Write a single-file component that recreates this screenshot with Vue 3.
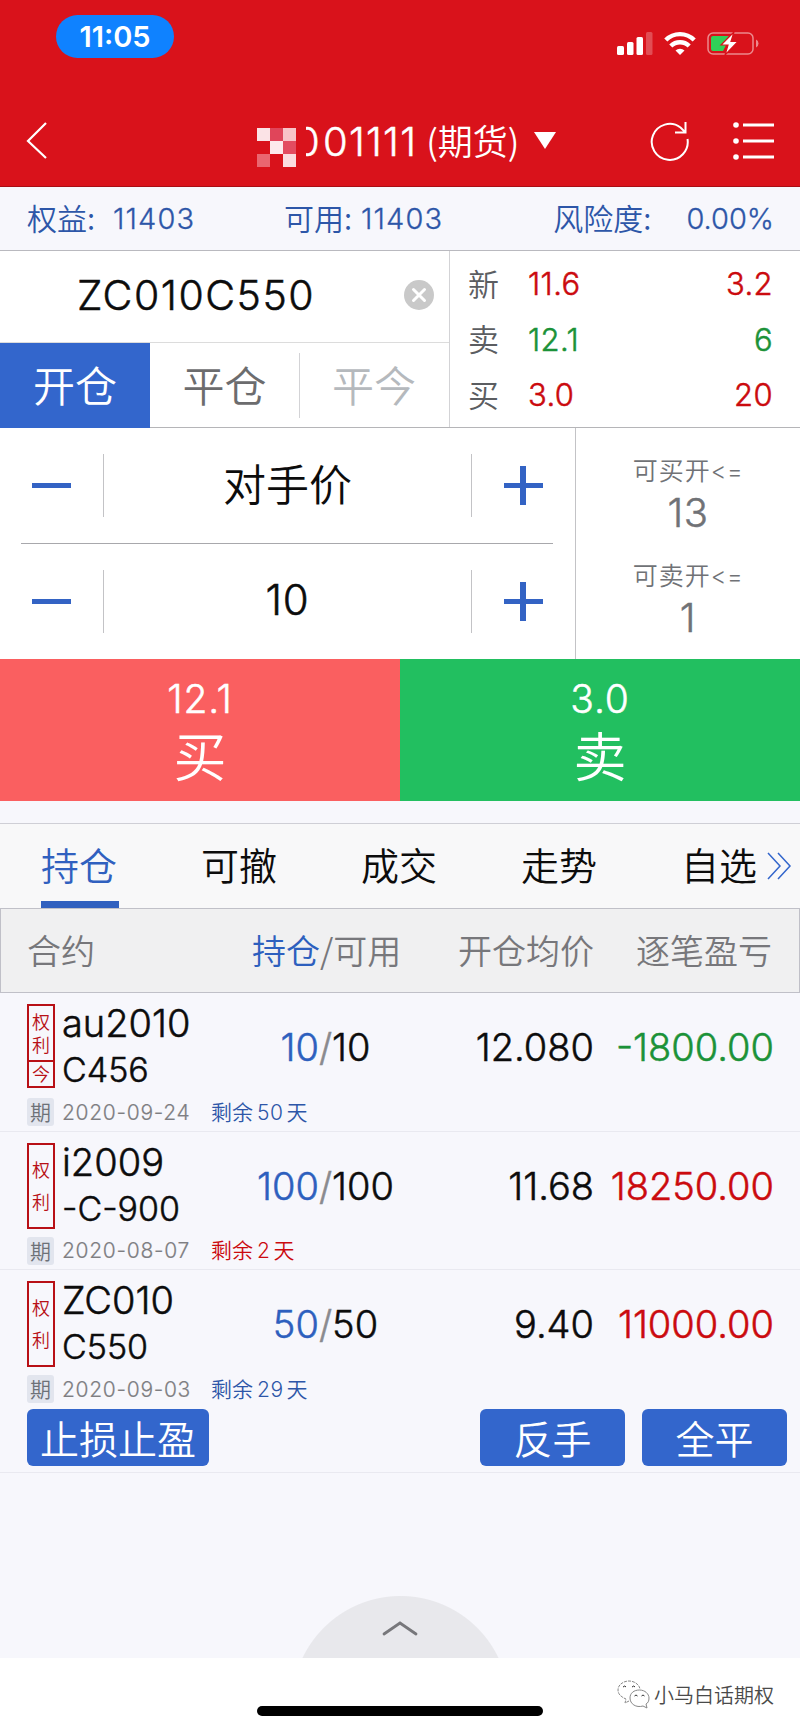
<script setup>
import { ref } from "vue";

const quotes = [
  { label: "新", price: "11.6", volume: "3.2", color: "red" },
  { label: "卖", price: "12.1", volume: "6", color: "green" },
  { label: "买", price: "3.0", volume: "20", color: "red" },
];

const modes = ["开仓", "平仓", "平今"];
const mode = ref("开仓");

const tabs = ["持仓", "可撤", "成交", "走势", "自选"];
const activeTab = ref("持仓");

const count = ref(10);

const positions = [
  {
    name: "au2010",
    strike: "C456",
    today: true,
    date: "2020-09-24",
    days: 50,
    total: 10,
    usable: 10,
    price: "12.080",
    profit: "-1800.00",
  },
  {
    name: "i2009",
    strike: "-C-900",
    date: "2020-08-07",
    days: 2,
    total: 100,
    usable: 100,
    price: "11.68",
    profit: "18250.00",
  },
  {
    name: "ZC010",
    strike: "C550",
    date: "2020-09-03",
    days: 29,
    total: 50,
    usable: 50,
    price: "9.40",
    profit: "11000.00",
  },
];
</script>

<template>
  <div class="app">
    <header class="header">
      <div class="status">
        <span class="clock">11:05</span>
        <svg class="status-icons" width="144" height="28" viewBox="0 0 144 28">
          <g fill="#fff">
            <rect x="1" y="16" width="7" height="9" rx="1.5" />
            <rect x="11" y="12" width="6.5" height="13" rx="1.5" />
            <rect x="20.500" y="7" width="6.500" height="18" rx="1.5" />
            <rect x="30" y="2" width="6.500" height="23" rx="1.5" opacity=".25" />
            <path d="M64 25l-4.500-4.500a6.500 6.500 0 0 1 9 0z" />
          </g>
          <g fill="none" stroke="#fff" stroke-width="4.400">
            <path d="M49.800 10a20 20 0 0 1 28.400 0" />
            <path d="M54.800 16a13 13 0 0 1 18.400 0" />
          </g>
          <rect x="92" y="3" width="45" height="21" rx="5" fill="none" stroke="#fff" stroke-opacity=".5" stroke-width="1.500" />
          <path d="M140 9.500q2.500 1 2.500 4t-2.500 4z" fill="#fff" opacity=".5" />
          <path d="M97 6h16l-7 9h4l-3 6H97q-2 0-2-2V8q0-2 2-2z" fill="#30d158" />
          <path d="M118 2l-13 13h7l-3 10 13-13.500h-7z" fill="#fff" stroke="#d9121b" stroke-width="1.200" />
        </svg>
      </div>
      <div class="nav">
        <svg class="back" width="22" height="38" viewBox="0 0 22 38">
          <path d="M20 1L2 19l18 17" fill="none" stroke="#fff" stroke-width="2.200" />
        </svg>
        <div class="account">
          <svg class="mosaic" width="39" height="39" viewBox="0 0 3 3" shape-rendering="crispEdges">
            <rect width="1" height="1" fill="#fbe3e6" />
            <rect x="1" width="1" height="1" fill="#e0455a" />
            <rect x="2" width="1" height="1" fill="#f8c3c8" />
            <rect x="1" y="1" width="1" height="1" fill="#fdeaec" />
            <rect x="2" y="1" width="1" height="1" fill="#e34c60" />
            <rect y="2" width="1" height="1" fill="#ea6670" />
            <rect x="2" y="2" width="1" height="1" fill="#fbdcdf" />
          </svg>
          <span class="clip"><span>0</span></span>
          <span class="number">01111</span>
          <span class="kind zh">(期货)</span>
          <span class="caret"></span>
        </div>
        <svg class="refresh" width="42" height="42" viewBox="0 0 42 42">
          <path d="M38.500 19a18 18 0 1 1-7-11.500l4 4M36.500 2v10.500H26" fill="none" stroke="#fff" stroke-width="2" />
        </svg>
        <svg class="menu" width="42" height="40" viewBox="0 0 42 40">
          <g fill="#fff">
            <circle cx="3" cy="4" r="2.800" />
            <circle cx="3" cy="20" r="2.800" />
            <circle cx="3" cy="36" r="2.800" />
            <path d="M10 2.500h31v3H10zM10 18.500h31v3H10zM10 34.500h31v3H10z" />
          </g>
        </svg>
      </div>
    </header>

    <div class="funds">
      <span class="fund equity"><span class="zh">权益:</span><b>11403</b></span>
      <span class="fund free"><span class="zh">可用:</span><b>11403</b></span>
      <span class="fund risk"><span class="zh">风险度:</span><b>0.00%</b></span>
    </div>

    <section class="contract">
      <div class="contract-left">
        <div class="symbol">
          <span>ZC010C550</span>
          <svg width="30" height="30" viewBox="0 0 30 30">
            <circle cx="15" cy="15" r="15" fill="#c9c9c9" />
            <path d="M9.500 9.500l11 11M20.500 9.500l-11 11" stroke="#fff" stroke-width="3" stroke-linecap="round" />
          </svg>
        </div>
        <div class="modes">
          <div
            v-for="(item, index) in modes"
            :key="item"
            class="mode zh"
            :class="{ active: mode === item, disabled: index === 2 }"
            @click="mode = item"
          >
            {{ item }}
          </div>
        </div>
      </div>
      <div class="quotes">
        <div class="quote" v-for="q in quotes" :key="q.label">
          <span class="quote-label zh">{{ q.label }}</span>
          <span :class="q.color">{{ q.price }}</span>
          <span class="volume" :class="q.color">{{ q.volume }}</span>
        </div>
      </div>
    </section>

    <section class="ticket">
      <div class="inputs">
        <div class="stepper">
          <button class="step minus"></button>
          <div class="value zh">对手价</div>
          <button class="step plus"></button>
        </div>
        <div class="stepper">
          <button class="step minus" @click="count--"></button>
          <div class="value">{{ count }}</div>
          <button class="step plus" @click="count++"></button>
        </div>
      </div>
      <div class="limits">
        <div class="limit"><span class="zh">可买开<u>&lt;=</u></span><b>13</b></div>
        <div class="limit"><span class="zh">可卖开<u>&lt;=</u></span><b>1</b></div>
      </div>
    </section>

    <div class="trade">
      <button class="buy"><span>12.1</span><strong class="zh">买</strong></button>
      <button class="sell"><span>3.0</span><strong class="zh">卖</strong></button>
    </div>

    <nav class="tabs">
      <div
        v-for="tab in tabs"
        :key="tab"
        class="tab zh"
        :class="{ active: activeTab === tab }"
        @click="activeTab = tab"
      >
        {{ tab }}
      </div>
      <svg class="more" width="26" height="28" viewBox="0 0 26 28">
        <path d="M1 1l12 13L1 27M11 1l12 13-12 13" fill="none" stroke="#3366cc" stroke-width="1.500" />
      </svg>
    </nav>

    <div class="grid thead zh">
      <span>合约</span>
      <span class="center"><em>持仓</em>/可用</span>
      <span class="right">开仓均价</span>
      <span class="right">逐笔盈亏</span>
    </div>

    <div class="position" v-for="p in positions" :key="p.name">
      <div class="grid">
        <div class="instrument">
          <div class="tag zh" :class="{ short: p.today }">
            <div class="tag-main"><i>权</i><i>利</i></div>
            <div class="tag-today" v-if="p.today">今</div>
          </div>
          <div class="names">
            <div class="name">{{ p.name }}</div>
            <div class="strike">{{ p.strike }}</div>
          </div>
        </div>
        <div class="amount center">
          <em>{{ p.total }}</em><span class="slash">/</span><span>{{ p.usable }}</span>
        </div>
        <div class="amount right">{{ p.price }}</div>
        <div class="amount right" :class="p.profit[0] === '-' ? 'green' : 'red'">{{ p.profit }}</div>
      </div>
      <div class="expiry">
        <span class="badge zh">期</span>
        <span class="date">{{ p.date }}</span>
        <span class="remain zh" :class="{ red: p.days < 10 }">剩余<u>{{ p.days }}</u>天</span>
      </div>
    </div>

    <div class="actions zh">
      <button class="stop">止损止盈</button>
      <button>反手</button>
      <button>全平</button>
    </div>

    <div class="drawer">
      <div class="handle">
        <svg width="36" height="16" viewBox="0 0 36 16">
          <path d="M2 14L18 3l16 11" fill="none" stroke="#77777b" stroke-width="2.800" stroke-linecap="round" />
        </svg>
      </div>
    </div>

    <footer class="footer">
      <div class="home-bar"></div>
      <div class="credit">
        <svg width="34" height="30" viewBox="0 0 34 30" fill="none" stroke="#888" stroke-width="1">
          <path d="M12 21l-4 2 1-4C4 17 1 14 1 10 1 5 6 1 12 1c5 0 10 3 11 8" stroke-dasharray="3 1" />
          <path d="M30 28l-4-2c-7 2-13-2-13-8 0-5 4-8 9.500-8S32 14 32 18c0 3-1 5-3 6z" />
          <path d="M6 7q2-2 3 0M15 7q2-2 3 0M17.500 16q1.500-2 3 0M24.500 16q1.500-2 3 0" stroke="#333" />
        </svg>
        <span class="zh">小马白话期权</span>
      </div>
    </footer>
  </div>
</template>

<style>
body {
  margin: 0;
}
</style>

<style scoped>
.app {
  width: 800px;
  height: 1731px;
  display: flex;
  flex-direction: column;
  overflow: hidden;
  background: #f7f7fc;
  color: #0c0c0c;
  font-family: Inter, "Noto Sans CJK SC", sans-serif;
  font-weight: 350;
  -webkit-text-stroke: 0.5px;
  white-space: nowrap;
}
.app * {
  box-sizing: border-box;
}
.zh {
  font-family: "Noto Sans CJK SC", sans-serif;
  font-weight: 350;
  -webkit-text-stroke: 0;
}
b, em, i, u {
  font-weight: inherit;
  font-style: normal;
  text-decoration: none;
}
button {
  border: 0;
  padding: 0;
  color: #fff;
  font: inherit;
}
em {
  color: #2d5fbe;
}
.red {
  color: #cb0a0e;
}
.green {
  color: #1b9238;
}
.center {
  text-align: center;
}
.right {
  text-align: right;
}

/* Header */
.header {
  height: 187px;
  background: #d9121b;
  border-bottom: 1px solid #a80d14;
  color: #fff;
}
.status {
  height: 96px;
  padding: 15px 40px 0 56px;
  display: flex;
  justify-content: space-between;
}
.clock {
  width: 118px;
  height: 43px;
  border-radius: 22px;
  background: #0f82ff;
  font-size: 29px;
  font-weight: 600;
  line-height: 43px;
  text-align: center;
  -webkit-text-stroke: 0;
}
.status-icons {
  margin-top: 15px;
}
.nav {
  height: 90px;
  display: flex;
  align-items: center;
  padding: 0 25px 0 26px;
}
.account {
  display: flex;
  align-items: center;
  margin-left: 209px;
  font-size: 40px;
  letter-spacing: 1.3px;
}
.mosaic {
  margin-top: 12px;
}
.clip {
  width: 15px;
  height: 48px;
  margin-left: 10px;
  display: flex;
  justify-content: flex-end;
  overflow: hidden;
}
.number {
  margin-left: 2px;
}
.kind {
  margin: -4px 0 0 9px;
  font-size: 35px;
  letter-spacing: 0;
}
.caret {
  margin: 0 0 2px 15px;
  border: 11px solid transparent;
  border-top: 17px solid #fff;
  border-bottom: 0;
}
.refresh {
  margin-left: auto;
}
.menu {
  margin-left: 42px;
}

/* Funds */
.funds {
  height: 64px;
  display: flex;
  align-items: center;
  padding: 0 27px;
  border-bottom: 1px solid #b9b9bf;
  color: #2d56a8;
  font-size: 29px;
  letter-spacing: 1.1px;
  -webkit-text-stroke: 0.3px;
}
.fund {
  display: flex;
  align-items: center;
}
.fund .zh {
  margin-top: -4px;
  font-size: 30px;
  letter-spacing: 0;
}
.equity {
  width: 257px;
}
.equity b {
  margin-left: 18px;
}
.free b {
  margin-left: 9px;
}
.risk {
  margin-left: auto;
  margin-right: -1px;
}
.risk b {
  margin-left: 35px;
  letter-spacing: 0;
}

/* Contract and quotes */
.contract {
  height: 177px;
  display: flex;
  background: #fff;
  border-bottom: 1px solid #b5b5b8;
}
.contract-left {
  width: 450px;
  border-right: 1px solid #d3d3d6;
}
.symbol {
  height: 92px;
  display: flex;
  align-items: center;
  justify-content: space-between;
  padding: 0 15px 4px 77px;
  border-bottom: 1px solid #dcdcdc;
  font-size: 41px;
  letter-spacing: 1.5px;
}
.modes {
  height: 85px;
  display: flex;
}
.mode {
  width: 149px;
  margin: 10px 0;
  padding-bottom: 4px;
  display: flex;
  align-items: center;
  justify-content: center;
  font-size: 42px;
  color: #6c6c6e;
}
.mode.active {
  width: 150px;
  margin: 0;
  background: #3366cc;
  color: #fff;
}
.mode.disabled {
  border-left: 1px solid #d3d3d6;
  color: #b5b9bd;
}
.quotes {
  flex: 1;
  padding: 5px 27px 4px 18px;
}
.quote {
  height: 55.5px;
  display: flex;
  align-items: center;
  font-size: 31px;
  letter-spacing: 0.4px;
}
.quote-label {
  width: 60px;
  margin-top: -3px;
  color: #5b5d61;
}
.volume {
  margin-left: auto;
}

/* Order ticket */
.ticket {
  height: 231px;
  display: flex;
  background: #fff;
}
.inputs {
  width: 576px;
  padding: 0 22px 0 21px;
  border-right: 1px solid #c3c3c6;
}
.stepper {
  height: 115.5px;
  display: flex;
  align-items: center;
}
.stepper:first-child {
  border-bottom: 1px solid #a8a8ac;
}
.step {
  width: 60px;
  height: 39px;
  background: linear-gradient(#3363c4, #3363c4) 50% 50% / 39px 5px no-repeat;
}
.minus {
  margin-right: 22px;
}
.plus {
  width: 60px;
  margin-left: 21px;
  background: linear-gradient(#3363c4, #3363c4) 50% 50% / 39px 5px no-repeat,
    linear-gradient(#3363c4, #3363c4) 50% 50% / 6px 39px no-repeat;
}
.value {
  flex: 1;
  height: 63px;
  border: solid #c3c3c6;
  border-width: 0 1px;
  display: flex;
  align-items: center;
  justify-content: center;
  padding-bottom: 3px;
  font-size: 42px;
  letter-spacing: 0.8px;
}
.value.zh {
  padding-bottom: 7px;
  font-size: 43px;
  letter-spacing: 0;
}
.limits {
  flex: 1;
  padding: 22px 0 0;
  color: #707276;
}
.limit {
  height: 105px;
  display: flex;
  flex-direction: column;
  align-items: center;
}
.limit .zh {
  font-size: 25px;
  line-height: 38px;
  letter-spacing: 1px;
}
.limit u {
  font-family: Inter, sans-serif;
  font-size: 24px;
  letter-spacing: 0.5px;
}
.limit b {
  font-size: 40px;
  line-height: 44px;
  letter-spacing: 0.6px;
}

/* Buy and sell */
.trade {
  height: 142px;
  display: flex;
}
.trade button {
  flex: 1;
  display: flex;
  flex-direction: column;
  align-items: center;
  padding-top: 16px;
}
.trade span {
  font-size: 39px;
  line-height: 48px;
  letter-spacing: 0.8px;
}
.trade strong {
  font-size: 53px;
  line-height: 62px;
}
.buy {
  background: #fa5f60;
}
.sell {
  background: #22bf60;
}

/* Tabs */
.tabs {
  height: 85px;
  margin-top: 22px;
  display: flex;
  align-items: center;
  padding-left: 41px;
  border-top: 1px solid #cfcfd6;
  background: #f8f8f9;
  font-size: 38px;
}
.tab {
  width: 78px;
  height: 84px;
  margin-right: 82px;
  border-bottom: 7px solid transparent;
  line-height: 80px;
}
.tab.active {
  border-color: #3060bf;
  color: #3060bf;
}
.more {
  margin-left: -74px;
  flex: none;
}

/* Positions */
.grid {
  display: grid;
  grid-template-columns: 225px 147px 195px 180px;
  align-items: center;
  padding-left: 27px;
}
.thead {
  height: 85px;
  padding: 0 0 3px 26px;
  grid-template-columns: 225px 147px 195px 178px;
  border: 1px solid #c0c0c8;
  background: #f0f0f1;
  color: #77777b;
  font-size: 34px;
}
.position {
  height: 138.6px;
  border-bottom: 1px solid #e9e9f0;
}
.position .grid {
  height: 97px;
  padding-top: 11px;
}
.instrument {
  display: flex;
}
.tag {
  width: 28px;
  height: 86px;
  display: flex;
  flex-direction: column;
  border: 2px solid #b81016;
  color: #b81016;
  font-size: 18px;
  line-height: 20px;
}
.tag.short {
  height: 84px;
}
.tag-main {
  flex: 1;
  display: flex;
  flex-direction: column;
  align-items: center;
  padding: 8px 0 10px;
}
.tag i {
  flex: 1;
  display: flex;
  align-items: center;
}
.short .tag-main {
  padding: 3px 0 5px;
}
.tag-today {
  flex: none;
  height: 26px;
  border-top: 2px solid #b81016;
  line-height: 22px;
  text-align: center;
}
.names {
  margin-left: 7px;
}
.name {
  font-size: 38px;
  line-height: 38px;
}
.strike {
  margin-top: 4px;
  font-size: 34px;
  line-height: 47px;
}
.amount {
  font-size: 38px;
  align-self: start;
  margin-top: 20px;
}
.slash {
  color: #8a8a8e;
}
.expiry {
  height: 40px;
  display: flex;
  align-items: center;
  padding: 4px 0 0 27px;
  font-size: 21px;
}
.badge {
  width: 27px;
  height: 28px;
  border-radius: 3px;
  background: #e2e5ee;
  color: #6d7178;
  line-height: 26px;
  text-align: center;
}
.date {
  width: 149px;
  margin-left: 8px;
  color: #7e7e82;
  letter-spacing: 0.7px;
  -webkit-text-stroke: 0.2px;
}
.remain {
  margin-top: -3px;
  color: #2d56a8;
}
.remain.red {
  color: #cb0a0e;
}
.remain u {
  margin: 0 3px 0 4px;
  font-family: Inter, sans-serif;
  letter-spacing: 0.5px;
}
.actions {
  height: 65px;
  margin-top: -1px;
  display: flex;
  padding: 1px 13px 6px 27px;
  border-bottom: 1px solid #e9e9f0;
  background: #f7f7fc;
}
.actions button {
  width: 145px;
  height: 57px;
  margin-left: 17px;
  border-radius: 6px;
  background: #3366cc;
  font-size: 39px;
  line-height: 53px;
}
.actions .stop {
  width: 182px;
  margin: 0 auto 0 0;
}

/* Bottom */
.drawer {
  flex: 1;
  display: flex;
  align-items: flex-end;
  justify-content: center;
}
.handle {
  width: 217px;
  height: 62px;
  display: flex;
  justify-content: center;
  padding-top: 24px;
  background: radial-gradient(circle at 50% 108.5px, #e8e8ec 108px, transparent 109px);
}
.footer {
  position: relative;
  height: 73px;
  background: #fff;
}
.home-bar {
  width: 286px;
  height: 10px;
  margin: 0 auto;
  border-radius: 5px;
  background: #000;
  transform: translateY(48px);
}
.credit {
  position: absolute;
  top: 22px;
  right: 26px;
  display: flex;
  align-items: center;
  gap: 3px;
  color: #4a4a4a;
  font-size: 20px;
  line-height: 30px;
}
</style>
